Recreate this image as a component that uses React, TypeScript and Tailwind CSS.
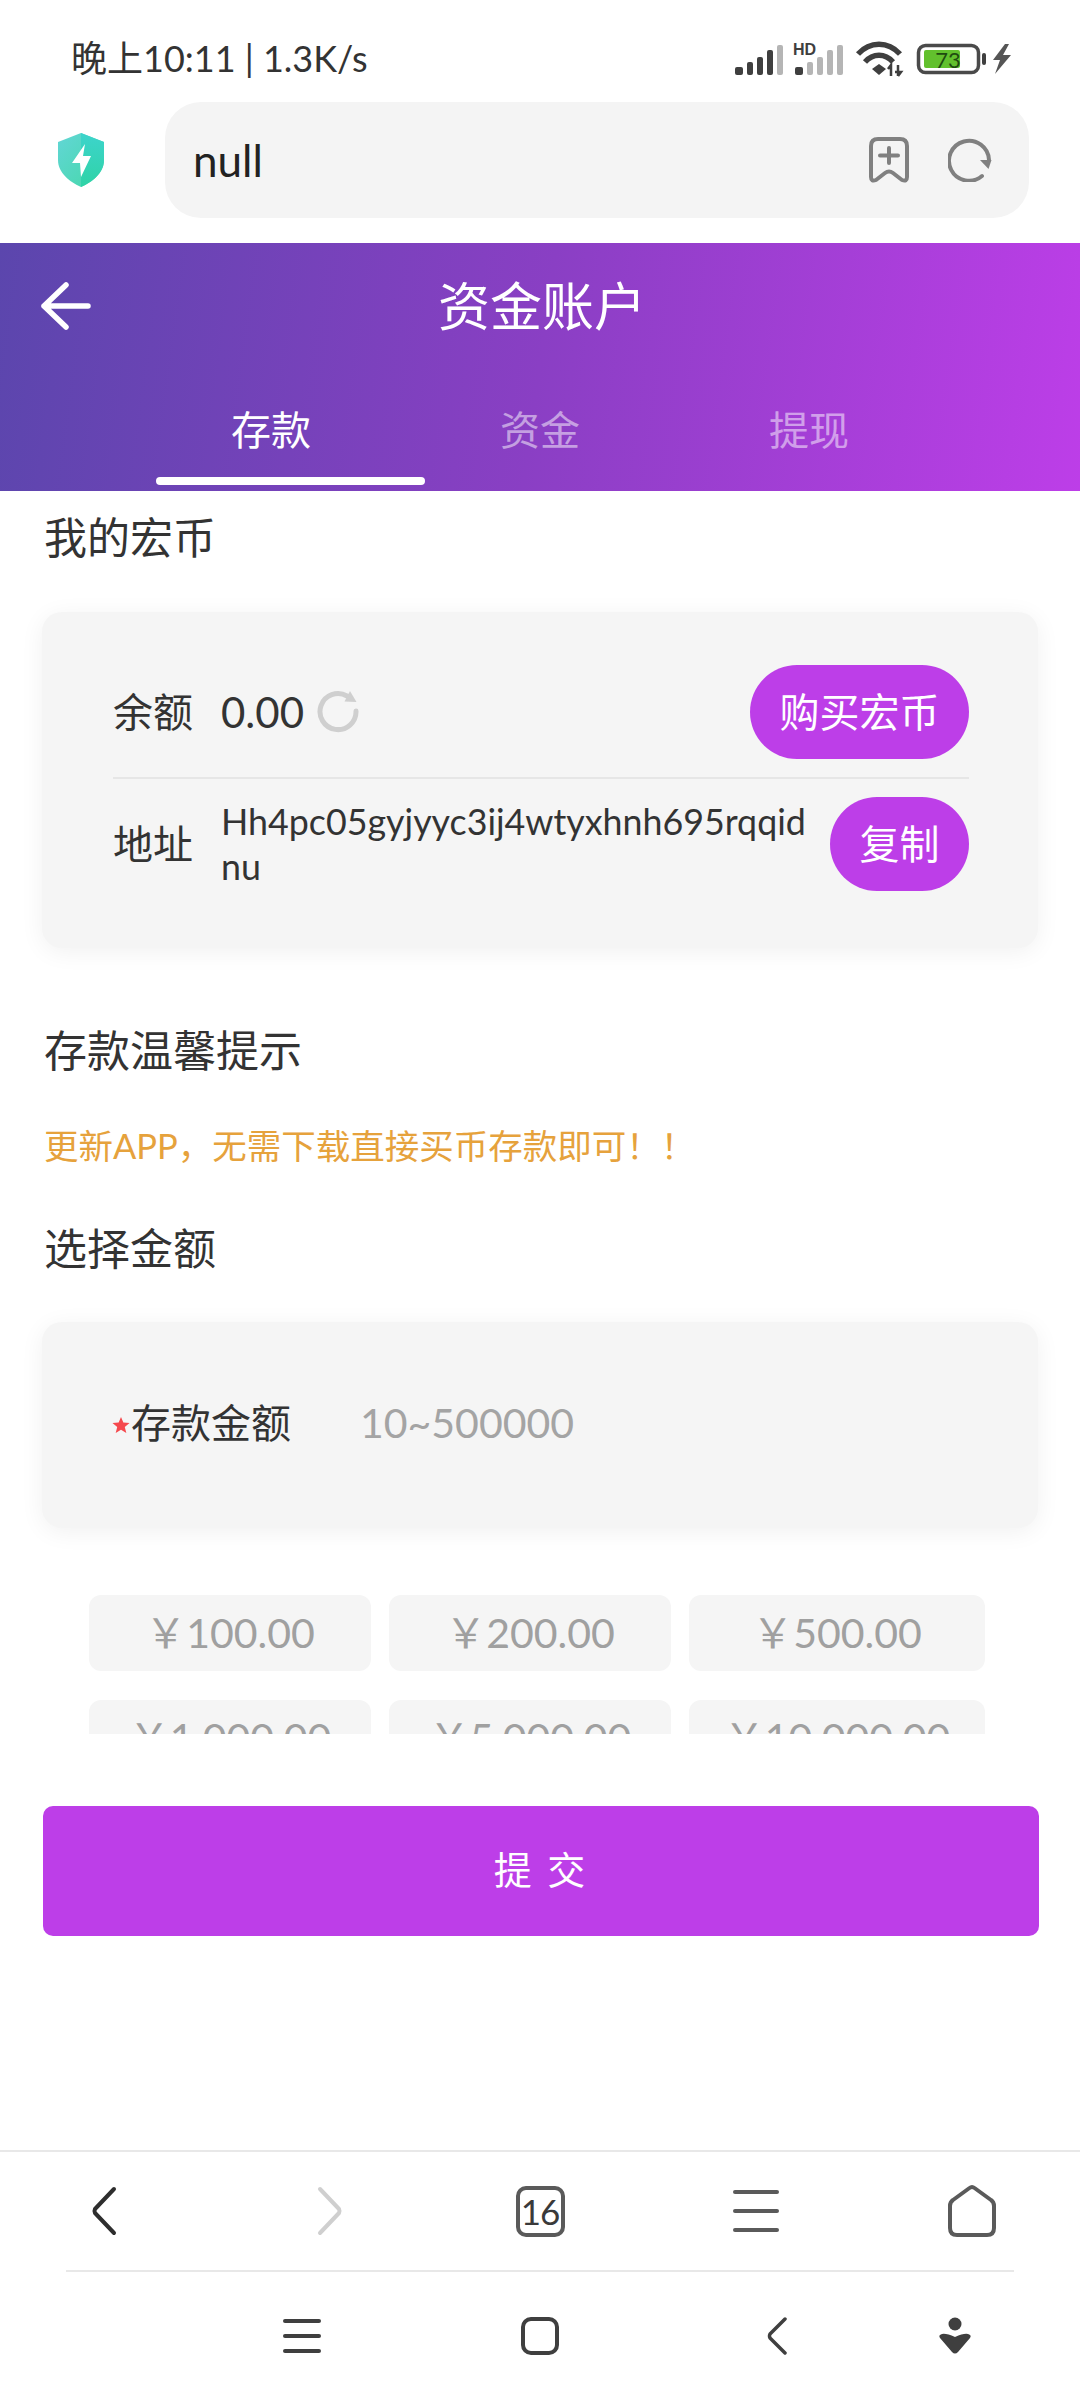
import React from "react";

const font = "font-['Lato','Noto_Sans_CJK_SC',sans-serif]";

function StatusIcons() {
  const bars = [
    [7, 67, 8, 8],
    [19, 62, 6, 13],
    [29, 57, 6, 18],
    [39, 50, 6, 25],
    [49, 45, 6, 30],
  ];
  const bars2 = [
    [67, 67, 8, 8],
    [79, 62, 6, 13],
    [89, 57, 6, 18],
    [99, 50, 6, 25],
    [109, 45, 6, 30],
  ];
  return (
    <svg width="290" height="44" viewBox="0 38 290 44" className="shrink-0">
      {bars.map((b, i) => (
        <rect key={i} x={b[0]} y={b[1]} width={b[2]} height={b[3]} rx="2" fill={i === 4 ? "#b5b5b5" : "#3f3f3f"} />
      ))}
      {bars2.map((b, i) => (
        <rect key={i} x={b[0]} y={b[1]} width={b[2]} height={b[3]} rx="2" fill={i === 0 ? "#3f3f3f" : "#b5b5b5"} />
      ))}
      <text x="65" y="55" fontSize="16" fontWeight="700" fill="#3f3f3f" fontFamily="Liberation Sans">HD</text>
      <g fill="none" stroke="#3f3f3f" strokeWidth="5.5" strokeLinecap="butt">
        <path d="M130 54 C142 41 160 41 172 54" />
        <path d="M137 62 C145 53 157 53 165 62" />
      </g>
      <path d="M144 69 L151 64 L158 69 L151 75 Z" fill="#3f3f3f" />
      <path d="M163 76 V66 M160 69 L163 65 L163 69 M170 65 V76 M170 76 L173 72 L167 72" stroke="#3f3f3f" strokeWidth="2.5" fill="none" />
      <rect x="190.5" y="45.5" width="60" height="27" rx="7" fill="#fff" stroke="#4a4a4a" strokeWidth="3.5" />
      <rect x="196" y="50" width="36" height="18" rx="2" fill="#62c02d" />
      <text x="220" y="68" fontSize="22" textAnchor="middle" fill="#1f4a10" fontFamily="Lato">73</text>
      <rect x="254" y="53" width="4" height="12" rx="2" fill="#3f3f3f" />
      <path d="M277 44 L265 60 H272 L267 74 L283 55 H275 L281 44 Z" fill="#555" />
    </svg>
  );
}

function Shield() {
  return (
    <svg width="50" height="56" viewBox="0 0 50 56" className="shrink-0">
      <defs>
        <linearGradient id="sh" x1="0" y1="0" x2="1" y2="1">
          <stop offset="0" stopColor="#62d6d6" />
          <stop offset="1" stopColor="#45d8a8" />
        </linearGradient>
        <linearGradient id="sh2" x1="0" y1="0" x2="0" y2="1">
          <stop offset="0" stopColor="#3dd4cc" />
          <stop offset="1" stopColor="#2fd3a6" />
        </linearGradient>
      </defs>
      <path d="M25 1 L48 10 V28 C48 41 36 50 25 55 C14 50 2 41 2 28 V10 Z" fill="url(#sh)" />
      <path d="M25 1 L48 10 V28 C48 41 36 50 25 55 Z" fill="url(#sh2)" />
      <path d="M29 12 L16 31 H24 L25 45 L35 24 H27 Z" fill="#fff" />
    </svg>
  );
}

function Bookmark() {
  return (
    <svg width="40" height="46" viewBox="0 0 40 46" fill="none" stroke="#808080" strokeWidth="4" strokeLinejoin="round" strokeLinecap="round">
      <path d="M2 9 Q2 2 9 2 H31 Q38 2 38 9 V40 Q38 45 33 43 L24 36 Q20 33 16 36 L7 43 Q2 45 2 40 Z" />
      <path d="M20 11 V26 M11 18.5 H29" />
    </svg>
  );
}

function AddressReload() {
  return (
    <svg width="44" height="44" viewBox="0 0 44 44" fill="none">
      <path d="M34 38 A20 20 0 1 1 41 22" stroke="#808080" strokeWidth="4" strokeLinecap="round" />
      <path d="M32 22 H43.5 L40.5 31 Z" fill="#808080" />
    </svg>
  );
}

function BalanceReload() {
  return (
    <svg width="44" height="44" viewBox="0 0 44 44" fill="none">
      <path d="M31 7 A18 18 0 1 0 40 22" stroke="#cfcfcf" strokeWidth="5" strokeLinecap="round" />
      <path d="M34 2 L40.5 13 L28.5 12.5 Z" fill="#cfcfcf" />
    </svg>
  );
}

function Chip({ label }: { label: string }) {
  return (
    <div className="flex items-center justify-center h-[76px] rounded-[12px] bg-[#f5f5f5] text-[41px] text-[#a0a0a0]">{label}</div>
  );
}

function Pill({ children, className }: { children: React.ReactNode; className: string }) {
  return (
    <div className={"shrink-0 h-[94px] rounded-[47px] bg-[#bd3ee8] text-white text-[40px] flex items-center justify-center " + className}>{children}</div>
  );
}

export default function App() {
  return (
    <div className={"w-[1080px] h-[2400px] bg-white overflow-hidden flex flex-col " + font}>
      {/* status bar */}
      <div className="h-[102px] shrink-0 flex items-start justify-between pl-[71px] pr-[62px] pt-[36px]">
        <div className="text-[36px] leading-[44px] text-[#333]">晚上10:11 | 1.3K/s</div>
        <div className="mt-[2px]">
          <StatusIcons />
        </div>
      </div>

      {/* browser address row */}
      <div className="h-[141px] shrink-0 flex items-start pl-[56px] pr-[51px]">
        <div className="w-[109px] h-[116px] shrink-0 flex items-center">
          <Shield />
        </div>
        <div className="flex-1 h-[116px] rounded-[36px] bg-[#f4f4f4] flex items-center pl-[28px] pr-[37px]">
          <div className="flex-1 text-[44px] text-[#222]">null</div>
          <Bookmark />
          <div className="ml-[39px]">
            <AddressReload />
          </div>
        </div>
      </div>

      {/* header */}
      <div className="h-[248px] shrink-0 bg-[linear-gradient(98deg,#5b46ad_0%,#8a3fc4_50%,#bd3ee8_100%)] flex flex-col text-white">
        <div className="h-[126px] grid grid-cols-[1fr_auto_1fr] items-center pl-[41px]">
          <svg width="50" height="48" viewBox="0 0 50 48" fill="none" stroke="#fff" strokeWidth="5.5" strokeLinecap="round" strokeLinejoin="round">
            <path d="M25 3 L3 24 L25 45 M3 24 H47" />
          </svg>
          <div className="text-[52px] leading-[60px] pr-[37px]">资金账户</div>
          <div />
        </div>
        <div className="relative mx-auto w-[807px] h-[122px] grid grid-cols-3 text-center text-[40px] leading-[122px]">
          <div>存款</div>
          <div className="text-white/50">资金</div>
          <div className="text-white/50">提现</div>
          <div className="absolute left-[19px] top-[108px] w-[269px] h-[8px] rounded-[4px] bg-white" />
        </div>
      </div>

      {/* content */}
      <div className="shrink-0 h-[1659px] flex flex-col">
        <div className="px-[44px] mt-[19px] text-[43px] leading-[56px] text-[#333]">我的宏币</div>

        <div className="mx-[42px] mt-[46px] h-[336px] rounded-[20px] bg-[#f5f5f5] shadow-[0_4px_24px_rgba(0,0,0,0.06)] pl-[71px] pr-[69px] pt-[53px] flex flex-col">
          <div className="h-[114px] flex items-start border-b-2 border-[#e6e6e6]">
            <div className="w-[108px] text-[40px] leading-[94px] text-[#333]">余额</div>
            <div className="text-[42px] leading-[94px] text-[#333]">0.00</div>
            <div className="ml-[12px] mt-[24px]">
              <BalanceReload />
            </div>
            <div className="flex-1" />
            <Pill className="w-[219px]">购买宏币</Pill>
          </div>
          <div className="flex items-center mt-[18px] h-[94px]">
            <div className="w-[108px] text-[40px] text-[#333]">地址</div>
            <div className="w-[593px] text-[35.8px] leading-[45px] text-[#333] break-all">Hh4pc05gyjyyc3ij4wtyxhnh695rqqidnu</div>
            <div className="flex-1" />
            <Pill className="w-[139px]">复制</Pill>
          </div>
        </div>

        <div className="px-[44px] mt-[75px] text-[43px] leading-[56px] text-[#333]">存款温馨提示</div>
        <div className="px-[44px] mt-[45px] text-[34.5px] leading-[44px] text-[#e6a23c]">更新APP，无需下载直接买币存款即可！！</div>
        <div className="px-[44px] mt-[53px] text-[43px] leading-[56px] text-[#333]">选择金额</div>

        <div className="mx-[42px] mt-[45px] h-[206px] rounded-[20px] bg-[#f5f5f5] shadow-[0_4px_24px_rgba(0,0,0,0.06)] pl-[70px] pb-[5px] flex items-center">
          <svg width="18" height="18" viewBox="0 0 20 20" className="shrink-0 mt-[4px]">
            <path d="M10 1 L12.6 7.2 L19.5 7.8 L14.2 12.2 L15.9 19 L10 15.4 L4.1 19 L5.8 12.2 L0.5 7.8 L7.4 7.2 Z" fill="#f5484d" />
          </svg>
          <div className="text-[40px] text-[#333] ml-[1px]">存款金额</div>
          <div className="text-[41px] text-[#a4a4a4] ml-[69px]">10~500000</div>
        </div>

        <div className="ml-[89px] w-[896px] mt-[67px] h-[139px] overflow-hidden">
          <div className="grid grid-cols-[282px_282px_296px] gap-x-[18px] gap-y-[29px]">
            <Chip label="￥100.00" />
            <Chip label="￥200.00" />
            <Chip label="￥500.00" />
            <Chip label="￥1,000.00" />
            <Chip label="￥5,000.00" />
            <Chip label="￥10,000.00" />
          </div>
        </div>

        <div className="ml-[43px] mr-[41px] mt-[72px] h-[130px] rounded-[10px] bg-[#bd3ee8] text-white text-[38px] tracking-[3px] pb-[4px] flex items-center justify-center">提 交</div>
      </div>

      {/* browser bottom bar */}
      <div className="shrink-0 border-t-2 border-[#e8e8e8]">
        <div className="h-[118px] grid grid-cols-5 items-center justify-items-center">
          <svg width="30" height="50" viewBox="0 0 30 50" fill="none" stroke="#2e2e2e" strokeWidth="4" strokeLinecap="round" strokeLinejoin="round" className="-translate-x-[3px]">
            <path d="M24 3 L5 23 Q4 25 5 27 L24 47" />
          </svg>
          <svg width="30" height="50" viewBox="0 0 30 50" fill="none" stroke="#cfcfcf" strokeWidth="4" strokeLinecap="round" strokeLinejoin="round" className="translate-x-[5px]">
            <path d="M6 3 L25 23 Q26 25 25 27 L6 47" />
          </svg>
          <div className="w-[49px] h-[51px] rounded-[10px] border-[4px] border-[#5a5a5a] flex items-center justify-center text-[35px] text-[#3a3a3a] tracking-[-1px]">16</div>
          <svg width="46" height="46" viewBox="0 0 46 46" fill="#5a5a5a">
            <rect x="0" y="2" width="46" height="4" rx="2" />
            <rect x="0" y="21" width="46" height="4" rx="2" />
            <rect x="0" y="40" width="46" height="4" rx="2" />
          </svg>
          <svg width="52" height="54" viewBox="0 0 52 54" fill="none" stroke="#5a5a5a" strokeWidth="4" strokeLinejoin="round">
            <path d="M23.5 4 Q26 2 28.5 4 L45 16 Q48 18 48 22 V44 Q48 51 41 51 H11 Q4 51 4 44 V22 Q4 18 7 16 Z" />
          </svg>
        </div>
        <div className="mx-[66px] border-t-2 border-[#e8e8e8]" />
        <div className="h-[128px] flex items-center pl-[283px]">
          <svg width="38" height="36" viewBox="0 0 38 36" fill="#3f3f3f">
            <rect x="0" y="1" width="38" height="4" rx="2" />
            <rect x="0" y="16" width="38" height="4" rx="2" />
            <rect x="0" y="31" width="38" height="4" rx="2" />
          </svg>
          <svg width="38" height="38" viewBox="0 0 38 38" fill="none" stroke="#3f3f3f" strokeWidth="4" className="ml-[200px]">
            <rect x="2" y="2" width="34" height="34" rx="8" />
          </svg>
          <svg width="22" height="38" viewBox="0 0 22 38" fill="none" stroke="#3f3f3f" strokeWidth="3.5" strokeLinecap="round" strokeLinejoin="round" className="ml-[207px]">
            <path d="M19 2 L4 17 Q3 19 4 21 L19 36" />
          </svg>
          <svg width="34" height="38" viewBox="0 0 34 38" fill="#3f3f3f" className="ml-[150px]">
            <circle cx="17" cy="7" r="6.5" />
            <path d="M2 21 Q0 18 4 17 Q8 16 17 20 Q26 16 30 17 Q34 18 32 21 L20 35 Q17 38 14 35 Z" />
          </svg>
        </div>
      </div>
    </div>
  );
}
